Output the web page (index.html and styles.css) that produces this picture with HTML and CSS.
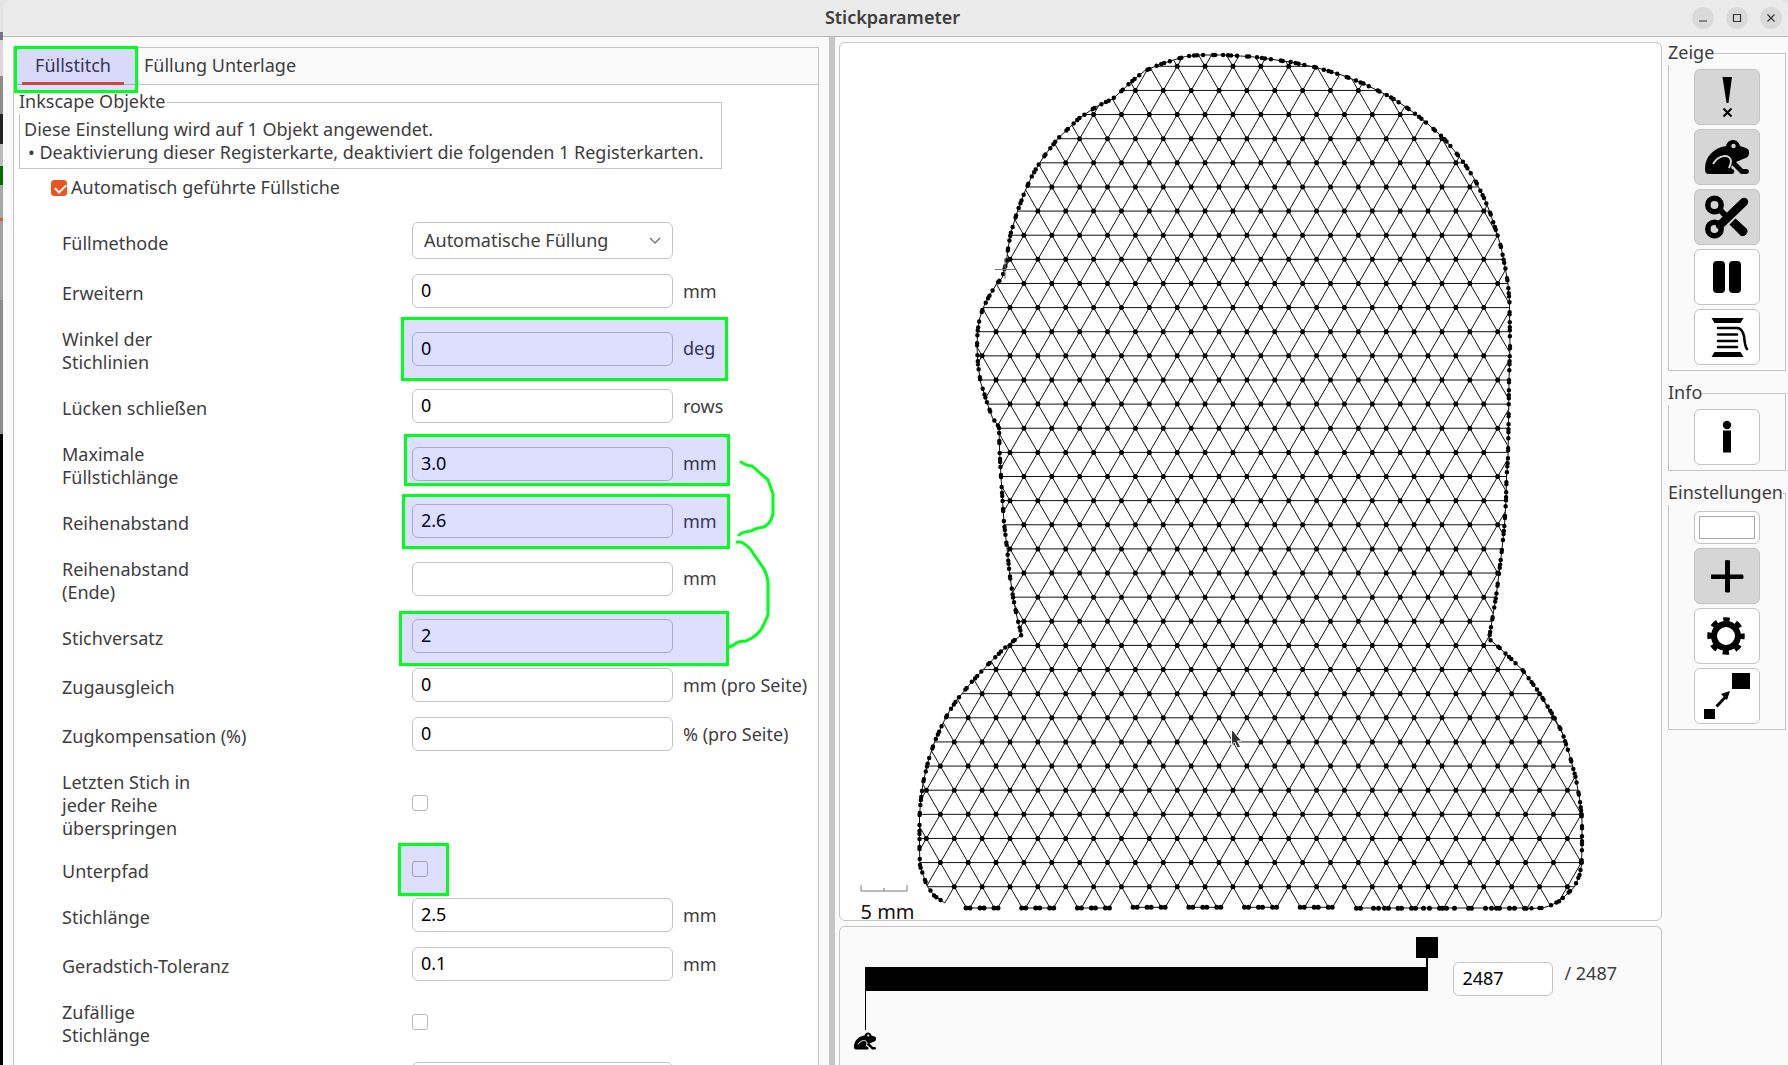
FILE: index.html
```html
<!DOCTYPE html>
<html lang="de">
<head>
<meta charset="utf-8">
<title>Stickparameter</title>
<link rel="stylesheet" href="styles.css">
</head>
<body>
<svg class="symbols" aria-hidden="true">
  <symbol id="frog" viewBox="0 0 44 34">
    <path d="M0 29C0 16 9 8 21 6C22 2 25 0 28 0C31 0 34 2 35 6L41 8C44 9 44 11 44 13C44 17 41 18 38 19L31 22L38 29L41 29C45 29 45 34 41 34L36 34L27 25C26 27 26 28 27 29C30 29 30 34 27 34L4 34C1 34 0 32 0 29Z"/>
    <path d="M8 24C14 14 25 14 26 21C26 24 25 26 24 28" fill="none" stroke="var(--face)" stroke-width="2"/>
    <circle cx="28.500" cy="6" r="2.200" fill="var(--face)"/>
  </symbol>
</svg>
<div class="window">
  <header class="titlebar">
    <h1>Stickparameter</h1>
    <div class="window-buttons">
      <button type="button" aria-label="Minimieren"><svg viewBox="0 0 22 22"><path d="M7 14h8"/></svg></button>
      <button type="button" aria-label="Maximieren"><svg viewBox="0 0 22 22"><path d="M7.500 7.500h7v7h-7z"/></svg></button>
      <button type="button" aria-label="Schließen"><svg viewBox="0 0 22 22"><path d="M7.500 7.500l7 7M14.500 7.500l-7 7"/></svg></button>
    </div>
  </header>
  <main class="content">
    <section class="parameters">
      <div class="notebook">
        <nav class="tabs">
          <button type="button" class="tab active">Füllstitch</button>
          <button type="button" class="tab">Füllung Unterlage</button>
        </nav>
        <form class="page">
          <fieldset class="objects">
            <legend>Inkscape Objekte</legend>
            <p>Diese Einstellung wird auf 1 Objekt angewendet.</p>
            <p class="bullet">• Deaktivierung dieser Registerkarte, deaktiviert die folgenden 1 Registerkarten.</p>
          </fieldset>
          <label class="enable"><input type="checkbox" checked>Automatisch geführte Füllstiche</label>
          <div class="fields">
            <label for="f1">Füllmethode</label>
            <div class="select"><select id="f1"><option>Automatische Füllung</option></select><svg viewBox="0 0 12 8"><path d="M1 1l5 5l5-5"/></svg></div><span></span>
            <label for="f2">Erweitern</label><input id="f2" type="text" value="0"><span>mm</span>
            <label for="f3">Winkel der<br>Stichlinien</label><input id="f3" type="text" value="0"><span>deg</span>
            <label for="f4">Lücken schließen</label><input id="f4" type="text" value="0"><span>rows</span>
            <label for="f5">Maximale<br>Füllstichlänge</label><input id="f5" type="text" value="3.0"><span>mm</span>
            <label for="f6">Reihenabstand</label><input id="f6" type="text" value="2.6"><span>mm</span>
            <label for="f7">Reihenabstand<br>(Ende)</label><input id="f7" type="text" value=""><span>mm</span>
            <label for="f8">Stichversatz</label><input id="f8" type="text" value="2"><span></span>
            <label for="f9">Zugausgleich</label><input id="f9" type="text" value="0"><span>mm (pro Seite)</span>
            <label for="f10">Zugkompensation (%)</label><input id="f10" type="text" value="0"><span>% (pro Seite)</span>
            <label for="f11">Letzten Stich in<br>jeder Reihe<br>überspringen</label><input id="f11" type="checkbox"><span></span>
            <label for="f12">Unterpfad</label><input id="f12" type="checkbox"><span></span>
            <label for="f13">Stichlänge</label><input id="f13" type="text" value="2.5"><span>mm</span>
            <label for="f14">Geradstich-Toleranz</label><input id="f14" type="text" value="0.1"><span>mm</span>
            <label for="f15">Zufällige<br>Stichlänge</label><input id="f15" type="checkbox"><span></span>
            <span></span><input type="text" value="" aria-label="Zufallswert"><span></span>
          </div>
        </form>
      </div>
    </section>
    <div class="sash"></div>
    <section class="simulator">
      <div class="stage">
        <div class="preview">
          <svg id="drawing" viewBox="840 43 820 877" role="img" aria-label="Stichvorschau">
            <defs><clipPath id="shape-clip"><path id="shape" d="M1198 55L1185 56.500L1173 60L1159 64.500L1144 71L1130 82.500L1121 91L1112 99L1098 105.500L1090 110.500L1079 118L1070.500 126L1057 139L1046 153L1039 163L1032 175L1025 190L1017 211L1010 234L1007 252L1006 262L1001.500 278L996 284L988.500 296.500L982.500 308L979 319L977 332L976.500 347L977.500 365L980 382L987 404L992 418L998.500 427L999 450L1000.500 477L1003.500 523L1006.500 548L1009 573L1012.500 597L1016 615L1021 635L1010 643L1003 649L987 665L972 681L957 699L949 711L942.500 723L934 742L928 760L922.500 783L920 803L919 816L919 850L919.500 866L926.500 886L934 896L944.500 903L955 903L963 908L1526 908.500L1542 908L1550 905.500L1559 901L1574 887L1579 875L1581 865L1581.500 847L1581.500 821L1581 814L1579 798L1575 777L1569 755L1562 733L1553.500 717L1539 693L1522 670L1505.500 654L1497 646L1488.500 639L1491.500 621L1495.500 597L1499 570L1501.500 549L1504 525L1505.500 500L1506 477L1507.500 458L1508 428L1508.500 380L1509.500 347L1509 302L1507.500 284L1505 269L1500.500 247L1497 235L1489 211L1484 199L1474 179L1463.500 163L1454 151L1443.500 138.500L1424 121L1405.500 107L1389 96.500L1363 83.500L1341 75L1316 67.500L1290 62L1269 59L1254 57L1240 56L1222 55Z"/></clipPath></defs>
            <path id="lattice" class="thread" clip-path="url(#shape-clip)"/>
            <path id="outline" class="thread"/>
            <path id="outline-dots" class="points"/>
            <path id="knots" class="knots"/>
            <path class="origin" d="M994.500 269.500h20M1004.500 258v21"/>
            <path class="scale" d="M860.500 885v6h46v-6M883.500 888v3"/>
            <text x="860" y="919">5 mm</text>
            <path class="cursor" d="M1231 729v16l3-3l3 6l3-1l-3-6h4z"/>
          </svg>
        </div>
        <div class="timeline">
          <div class="track">
            <input type="range" min="1" max="2487" value="2487" aria-label="Aktueller Stich">
            <svg class="start" viewBox="0 0 22 60"><path d="M11.500 0v39" stroke="#000"/><use href="#frog" y="41" width="22" height="18"/></svg>
          </div>
          <input class="stitch" type="text" value="2487" aria-label="Stich">
          <span class="total">/ 2487</span>
        </div>
      </div>
      <aside class="tools">
        <fieldset>
          <legend>Zeige</legend>
          <button type="button" class="on" aria-label="Nadelpunkte"><svg viewBox="0 0 64 54"><path d="M27.500 7h9.500l-3.500 26h-2z"/><path d="M28.500 38.500l8 8M36.500 38.500l-8 8" stroke="#000" stroke-width="2"/></svg></button>
          <button type="button" class="on" aria-label="Sprünge"><svg viewBox="0 0 64 54"><use href="#frog" x="10" y="10" width="44" height="34"/></svg></button>
          <button type="button" class="on" aria-label="Fadenschnitte"><svg viewBox="0 0 64 54"><g fill="none" stroke="#000"><circle cx="19.500" cy="15" r="6.700" stroke-width="5.500"/><circle cx="19.500" cy="39" r="6.700" stroke-width="5.500"/><path d="M25 35L49 12" stroke-width="8.500" stroke-linecap="round"/><path d="M24 19l6 6" stroke-width="6"/></g><path d="M34 34l6-6l12 11q2 4-3 7h-3z"/><path d="M33 35l8-8" stroke="var(--face)" stroke-width="1.500"/></svg></button>
          <button type="button" aria-label="Pausen"><svg viewBox="0 0 64 54"><rect x="18" y="11" width="12" height="32" rx="4"/><rect x="34" y="11" width="12" height="32" rx="4"/></svg></button>
          <button type="button" aria-label="Farbwechsel"><svg viewBox="0 0 64 54"><path d="M16.500 8h32l-3 5h-26zM19.500 42h26l3 5h-32z"/><path d="M23 18h19q5 0 7 8q1 11 3 13M23 24.500h19M23 31h19M23 37h19" fill="none" stroke="#000" stroke-width="2.600" stroke-linecap="round"/></svg></button>
        </fieldset>
        <fieldset>
          <legend>Info</legend>
          <button type="button" aria-label="Information"><svg viewBox="0 0 64 54"><circle cx="32" cy="15" r="4.200"/><path d="M28 20.500h8v22h-8z"/></svg></button>
        </fieldset>
        <fieldset class="settings">
          <legend>Einstellungen</legend>
          <button type="button" class="swatch" aria-label="Hintergrundfarbe"><span></span></button>
          <button type="button" class="on" aria-label="Fadenkreuz"><svg viewBox="0 0 64 54"><path d="M16 25.500h14v-14q2-1 5 0v14h13q1 2 0 4.500h-13v13q-2 1-5 0v-13h-14z"/></svg></button>
          <button type="button" aria-label="Einstellungen"><svg viewBox="0 0 64 54"><circle cx="31" cy="27" r="12" fill="none" stroke="#000" stroke-width="6"/><circle cx="31" cy="27" r="16" fill="none" stroke="#000" stroke-width="5.500" stroke-dasharray="6.283 6.283" stroke-dashoffset="3.141"/></svg></button>
          <button type="button" aria-label="Größe anpassen"><svg viewBox="0 0 64 54"><path d="M37 4h18v16h-18zM9 40h11v10h-11z"/><path d="M21.500 37.500l9.500-10" stroke="#000" stroke-width="3"/><path d="M35 22l-9 3l6 6z"/></svg></button>
        </fieldset>
      </aside>
    </section>
  </main>
  <svg class="notes" width="830" height="900" viewBox="0 0 830 900" aria-hidden="true">
    <path class="mark" d="M15.500 47.500h121v44h-121zM402.500 318.500h324v61h-324zM405.500 435.500h323v49h-323zM403.500 495.500h325v52h-325zM400.500 612.500h327v52h-327zM399.500 844.500h48v50h-48z"/>
    <path class="link" d="M741 462q6 4 11 4q9 8 16 14l5 14v19q-1 7-5 11l-4 3q-8 1-13 4q-9 1-12 4M737 542h4q8 4 12 11l11 16q4 8 4 15v31l-4 9q-4 9-12 14l-6 3q-9 0-12 4l-5 2"/>
  </svg>
</div>
<script src="mesh.js"></script>
</body>
</html>
```
FILE: mesh.js
```js
// Stitch lattice: rows 24.13 apart, stitches 27.87 apart, every other row shifted by half a stitch.
(function () {
  const ROW = 24.13, STEP = 27.87, X0 = 1176.7, Y0 = 66.3, LAST = 34;
  const shape = document.getElementById('shape');
  const set = (id, d) => document.getElementById(id).setAttribute('d', d);
  const dot = (x, y) => `M${x} ${y}h0`;

  const contour = shape.getAttribute('d').slice(1, -1).split('L');
  const corners = contour.map(pair => pair.split(' ').map(Number));
  const inside = (x, y) => {
    let hit = false;
    corners.forEach(([ax, ay], i) => {
      const [bx, by] = corners[(i + 1) % corners.length];
      if ((ay > y) !== (by > y) && x < ax + (bx - ax) * (y - ay) / (by - ay)) hit = !hit;
    });
    return hit;
  };

  let lines = '', knots = '';
  for (let r = 0; r <= LAST; r++) {
    const y = Y0 + r * ROW;
    lines += `M900 ${y}H1600`;
    for (let k = -12; k < 18; k++) {
      const x = X0 + (k + (r % 2) / 2) * STEP;
      if (inside(x, y)) knots += dot(x, y);
    }
  }
  const start = Y0 - ROW, height = (LAST + 2) * ROW, run = (LAST + 2) * STEP / 2;
  for (let k = -40; k < 40; k++) {
    const x = X0 + (k + 0.5) * STEP;
    lines += `M${x} ${start}l${run} ${height}M${x} ${start}l${-run} ${height}`;
  }
  set('lattice', lines);

  // The contour is open along the hem, where it is stitched in short runs.
  const hem = contour.indexOf('955 903');
  const open = 'M' + contour.slice(hem + 2).concat(contour.slice(0, hem)).join('L');
  const rim = 'M' + contour.slice(contour.indexOf('1526 908.500')).concat(contour.slice(0, hem)).join('L');
  let hemLine = '';
  for (let i = 0; i < 7; i++) {
    const x = 965.5 + i * 55.7, y = i < 3 ? 908 : 907.3;
    hemLine += `M${x} ${y}h32`;
    [0, 4, 14, 18, 28, 32].forEach(d => { knots += dot(x + d, y); });
  }
  hemLine += 'M1356 908H1526';
  [1356, 1360, 1373, 1378, 1384, 1388, 1397.5, 1401, 1411, 1415, 1423, 1429, 1439, 1442, 1446, 1454, 1468, 1471, 1485, 1491, 1496, 1499, 1509, 1514, 1524]
    .forEach(x => { knots += dot(x, 908.3); });
  set('outline', rim + hemLine);
  set('outline-dots', rim);
  set('knots', knots);
})();
```
FILE: styles.css
```css
* { box-sizing: border-box; }

body {
  margin: 0;
  height: 100vh;
  overflow: hidden;
  padding-left: 3px;
  font: 18px/23px "Noto Sans", sans-serif;
  color: #3d3d3d;
  background: linear-gradient(#e4e4e4 0 32px, #777 32px 40px, #d8d8d8 40px 76px, #8c8c8c 76px 114px, #222 114px 144px, #bbb 144px 166px, #006d00 166px 185px, #a8a8a8 185px 218px, #d06040 218px 221px, #a0a0a0 221px 300px, #8c8c8c 300px 434px, #000 434px);
}

button, input, select { font: inherit; color: inherit; margin: 0; }
fieldset, p, h1 { margin: 0; }
.symbols { position: absolute; width: 0; height: 0; }

.window {
  height: 100%;
  display: flex;
  flex-direction: column;
  background: #fafafa;
  border-radius: 10px 10px 0 0;
  overflow: hidden;
}

.titlebar {
  flex: none;
  display: grid;
  grid-template-columns: 1fr auto 1fr;
  align-items: center;
  height: 37px;
  padding-right: 6px;
  background: #ebebeb;
  border-bottom: 1px solid #b8b8b8;
}
.titlebar h1 { grid-column: 2; padding-bottom: 2px; font-size: 18px; font-weight: 600; }
.window-buttons { display: flex; gap: 12px; justify-content: flex-end; }
.window-buttons button { width: 22px; height: 22px; padding: 0; border: 0; border-radius: 50%; background: #dadada; }
.window-buttons svg { display: block; fill: none; stroke: #333; stroke-width: 1.200; }

.content { flex: 1; min-height: 0; display: flex; }

.parameters { flex: none; width: 826px; padding: 10px 10px 0 10px; display: flex; }
.notebook { flex: 1; overflow: hidden; border: 1px solid #c4c4c4; border-bottom: 0; background: #fff; }
.tabs { display: flex; gap: 4px; height: 37px; padding-left: 8px; background: #fafafa; border-bottom: 1px solid #c4c4c4; }
.tab { height: 37px; padding: 0 12px 3px; border: 0; background: none; white-space: nowrap; }
.tab.active { width: 102px; padding: 0; border-bottom: 3px solid #e95420; }
.tab + .tab { padding-left: 16px; }

.page { padding: 6px 5px 0; }
.objects { width: 703px; height: 78px; padding: 4px 4px 0; border: 1px solid #c4c4c4; white-space: nowrap; }
.objects legend { height: 23px; margin-left: -5px; padding: 0 2px 0 0; line-height: 20px; background: #fff; }
.objects .bullet { padding-left: 4px; }

.enable { display: flex; align-items: center; gap: 4px; margin: 7px 0 23px 32px; height: 23px; }

input[type=checkbox] {
  appearance: none;
  width: 16px;
  height: 16px;
  border: 1px solid #b8b8b8;
  border-radius: 3px;
  background: #fff;
}
input[type=checkbox]:checked { position: relative; background: #e95420; border-color: #e95420; }
input[type=checkbox]:checked::after {
  content: "";
  position: absolute;
  left: 3px;
  top: 3px;
  width: 9px;
  height: 5px;
  border: solid #fff;
  border-width: 0 0 2px 2px;
  transform: rotate(-45deg);
}

.fields {
  display: grid;
  grid-template-columns: 350px 261px 1fr;
  row-gap: 15px;
  align-items: center;
  padding-left: 43px;
}
.fields label { padding-top: 5px; }
.fields span { padding-left: 10px; white-space: nowrap; }
input[type=text] {
  width: 100%;
  height: 34px;
  padding: 0 8px 2px;
  color: #000;
  border: 1px solid #c4c4c4;
  border-radius: 6px;
  background: #fff;
}
.select { position: relative; height: 37px; }
.select select { appearance: none; width: 100%; height: 37px; padding: 0 11px; border: 1px solid #c4c4c4; border-radius: 6px; background: #fff; }
.select svg { position: absolute; right: 12px; top: 15px; width: 12px; height: 8px; fill: none; stroke: #7a7a7a; stroke-width: 1.500; pointer-events: none; }

.sash { flex: none; width: 6px; background: #c6c6c6; }

.simulator { flex: 1; min-width: 0; display: flex; gap: 6px; padding: 5px 2px 0 4px; }
.stage { flex: 1; min-width: 0; display: flex; flex-direction: column; gap: 5px; }
.preview { flex: 1; min-height: 0; border: 1px solid #c4c4c4; border-radius: 6px; background: #fff; }
.preview svg { display: block; width: 100%; height: 100%; overflow: visible; }
.preview text { font-size: 20px; fill: #111; }
.thread { fill: none; stroke: #111; stroke-width: 1; }
.points { fill: none; stroke: #000; stroke-width: 4.500; stroke-linecap: round; stroke-dasharray: 0 5 0 8 0 2 0 10 0 6 0 3; }
.knots { stroke: #000; stroke-width: 5; stroke-linecap: round; }
.origin, .scale { fill: none; stroke: #777; }
.cursor { fill: #333; stroke: #fff; }

.timeline {
  flex: none;
  display: flex;
  align-items: flex-start;
  height: 139px;
  padding: 10px 44px 0 14px;
  border: 1px solid #c4c4c4;
  border-bottom: 0;
  border-radius: 6px 6px 0 0;
}
.track { flex: 1; display: flex; flex-direction: column; }
.track input {
  appearance: none;
  width: 100%;
  height: 54px;
  background: linear-gradient(#000, #000) 11px 30px / calc(100% - 22px) 24px no-repeat;
}
.track input::-webkit-slider-thumb {
  appearance: none;
  width: 22px;
  height: 54px;
  background: linear-gradient(#000, #000) 0 0 / 22px 21px no-repeat, linear-gradient(#000, #000) 10px 0 / 2px 54px no-repeat;
}
.start { width: 22px; height: 60px; --face: #fafafa; }
.timeline .stitch { width: 100px; margin: 25px 11px 0 15px; }
.total { margin-top: 25px; }

.tools { flex: none; width: 118px; display: flex; flex-direction: column; gap: 11px; }
.tools fieldset {
  display: flex;
  flex-direction: column;
  align-items: center;
  gap: 4px;
  min-width: 0;
  padding: 4px 0 5px;
  border: 1px solid #c4c4c4;
}
.tools legend { height: 23px; margin-left: -1px; padding: 0; line-height: 20px; white-space: nowrap; background: #fafafa; }
.tools button { width: 66px; height: 56px; padding: 0; border: 1px solid #c4c4c4; border-radius: 6px; background: #fff; --face: #fff; }
.tools button.on { background: #d6d6d6; --face: #d6d6d6; }
.tools button svg { display: block; width: 64px; height: 54px; }
.tools .settings { padding-top: 6px; }
.tools .swatch { height: 33px; padding: 4px; }
.swatch span { display: block; height: 23px; border: 1px solid #aaa; }

.notes { position: absolute; left: 0; top: 0; pointer-events: none; }
.mark { fill: #0000ff; fill-opacity: 0.130; stroke: #00ff1a; stroke-width: 3; }
.link { fill: none; stroke: #00ff1a; stroke-width: 3; stroke-linecap: round; }
```
